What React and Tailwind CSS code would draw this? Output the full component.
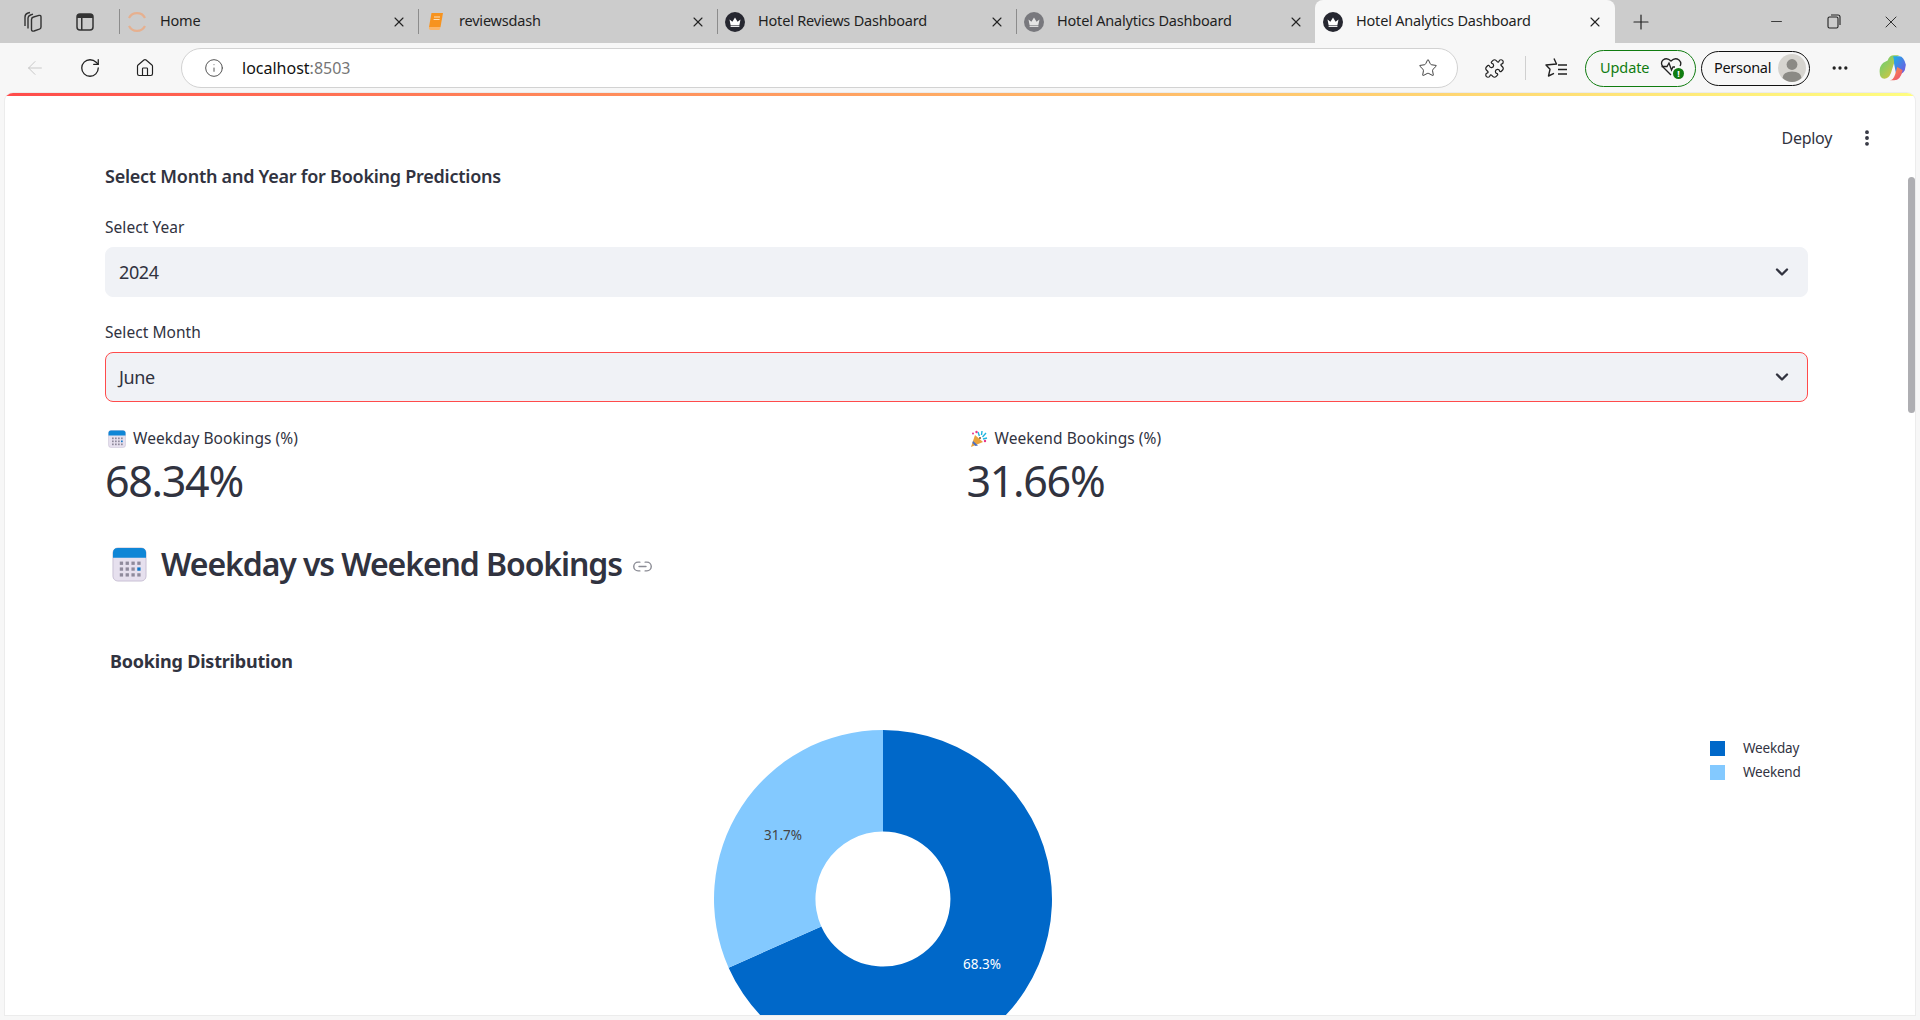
import React from 'react';
import { ArrowLeft, RotateCw, Home, Info, Star, Puzzle, X, Plus, Minus, MoreHorizontal, Link2, ChevronDown, EllipsisVertical } from 'lucide-react';

const Crown = ({ faded }) => (
  <svg width="20" height="20" viewBox="0 0 20 20" className={faded ? 'opacity-50' : ''}>
    <circle cx="10" cy="10" r="10" fill="#262730" />
    <path d="M4.5 7.5 L7.4 9.8 L10 5.6 L12.6 9.8 L15.5 7.5 L14.4 13 H5.6 Z" fill="#fff" />
    <rect x="5.6" y="13.6" width="8.8" height="1.3" fill="#fff" />
  </svg>
);

const Spinner = () => (
  <svg width="20" height="22" viewBox="0 0 20 22" fill="none" stroke="#e6b08f" strokeWidth="2.2">
    <path d="M2 7 A9 9 0 0 1 18 7" />
    <path d="M2 15 A9 9 0 0 0 18 15" />
  </svg>
);

const Book = () => (
  <svg width="16" height="19" viewBox="0 0 16 19">
    <path d="M3.5 1 H15 L12.5 15 H1 Z" fill="#f7931e" />
    <path d="M1 15 Q0.4 18 3 18 H11.5 L12.5 15 Z" fill="#fbb568" />
    <path d="M6 5 H12 M5.6 7.5 H11.6" stroke="#ffe0b8" strokeWidth="1" />
  </svg>
);

const TabIcons = () => (
  <div className="w-[119px] shrink-0 flex items-center">
    <svg width="24" height="24" viewBox="0 0 24 24" fill="none" stroke="#333" strokeWidth="1.4" className="ml-[20px]" strokeLinejoin="round">
      <path d="M5 16 V7 Q5 4 8 3 L10 2.5" />
      <path d="M8 18.5 V8 Q8 6 10.5 5 L13 4.2" />
      <path d="M11.5 9.5 Q11.5 7.5 13.5 7 L19 5.4 Q21 5 21 7 V17 Q21 18.6 19.4 19.2 L14 21 Q11.5 21.6 11.5 19.4 Z" />
    </svg>
    <svg width="20" height="20" viewBox="0 0 20 20" fill="none" className="ml-[31px]">
      <rect x="2" y="2" width="16" height="16" rx="3" stroke="#333" strokeWidth="1.5" />
      <path d="M2 5 Q2 2 5 2 H15 Q18 2 18 5 V6 H2 Z M6 6 H7.5 V18 H6 Z" fill="#333" />
    </svg>
  </div>
);

const tabs = [
  { title: 'Home', icon: <Spinner /> },
  { title: 'reviewsdash', icon: <Book /> },
  { title: 'Hotel Reviews Dashboard', icon: <Crown /> },
  { title: 'Hotel Analytics Dashboard', icon: <Crown faded /> },
  { title: 'Hotel Analytics Dashboard', icon: <Crown />, active: true },
];

const Tab = ({ title, icon, active }) => (
  <div className={active ? 'w-[300px] h-[43px] shrink-0 flex items-center bg-[#f7f7f7] rounded-t-lg pl-[8px]' : 'w-[299px] h-[43px] shrink-0 flex items-center'}>
    {!active && <div className="w-px h-[25px] bg-[#8c8c8c]" />}
    <div className={active ? 'w-[20px] flex justify-center' : 'w-[20px] ml-[7px] flex justify-center'}>{icon}</div>
    <span className="ml-[13px] mb-[2px] flex-1 text-[14.5px] tracking-[-0.2px] text-[#1f1f1f]">{title}</span>
    <X size={16} strokeWidth={1.6} className={active ? 'mr-[12px] text-[#222]' : 'mr-[11px] text-[#222]'} />
  </div>
);

const TabStrip = () => (
  <div className="h-[43px] shrink-0 bg-[#cccccc] flex items-center">
    <TabIcons />
    {tabs.map((t, i) => (
      <Tab key={i} {...t} />
    ))}
    <Plus size={24} strokeWidth={1.2} className="ml-[14px] text-[#222]" />
    <Minus size={17} strokeWidth={1.2} className="ml-[115px] text-[#222]" />
    <svg width="14" height="15" viewBox="0 0 14 15" fill="none" stroke="#222" strokeWidth="1.1" className="ml-[42px]">
      <rect x="1" y="3" width="10" height="11" rx="1.5" />
      <path d="M4 1 H11 Q13 1 13 3 V11" />
    </svg>
    <X size={20} strokeWidth={1.1} className="ml-[40px] text-[#222]" />
  </div>
);

const ToolButton = ({ children, className }) => (
  <div className={'w-[40px] h-[40px] flex items-center justify-center shrink-0 ' + (className || '')}>{children}</div>
);

const HeartAlert = () => (
  <div className="relative w-[24px] h-[22px]">
    <svg width="22" height="20" viewBox="0 0 22 20" fill="none" stroke="#222" strokeWidth="1.3">
      <path d="M11 18 L3 10 Q0 6 3 3 Q7 0 11 4 Q15 0 19 3 Q22 6 20 9" />
      <path d="M1.5 9.5 H7 L9 6 L11.5 13 L13 10 H15" />
    </svg>
    <div className="absolute right-0 bottom-0 w-[11px] h-[11px] rounded-full bg-[#107c10] text-white text-[9px] leading-[11px] font-bold text-center">!</div>
  </div>
);

const Avatar = () => (
  <svg width="28" height="28" viewBox="0 0 28 28">
    <circle cx="14" cy="14" r="14" fill="#d6d4cf" />
    <circle cx="14" cy="10.5" r="5.4" fill="#8b8a85" />
    <path d="M4.5 24 Q5 17.5 14 17.5 Q23 17.5 23.5 24 Q19 28 14 28 Q9 28 4.5 24 Z" fill="#8b8a85" />
  </svg>
);

const Copilot = () => (
  <svg width="30" height="30" viewBox="0 0 28 28">
    <defs>
      <linearGradient id="cpa" x1="0" y1="0" x2="1" y2="1">
        <stop offset="0" stopColor="#19b2e8" />
        <stop offset="1" stopColor="#7a4fe0" />
      </linearGradient>
      <linearGradient id="cpb" x1="0" y1="0" x2="1" y2="1">
        <stop offset="0" stopColor="#5ad17a" />
        <stop offset="1" stopColor="#f2c230" />
      </linearGradient>
      <linearGradient id="cpc" x1="0" y1="0" x2="1" y2="1">
        <stop offset="0" stopColor="#f9a03c" />
        <stop offset="1" stopColor="#ec4a7a" />
      </linearGradient>
    </defs>
    <path d="M9 7 Q10.5 2 15 2 H20 Q17 3 15.5 8 L12 19 Q10 24 6 24 Q1.5 24 1.5 17 Q1.5 12 5 9 Z" fill="url(#cpb)" />
    <path d="M14 3 H20 Q24 3 26 11 L25 16 Q22 21 17 20 L15 10 Q15 5 14 3 Z" fill="url(#cpa)" />
    <path d="M10 25.5 Q14 26 16 20 L18 13 L23 16 Q21 25.5 15 25.5 Z" fill="url(#cpc)" />
  </svg>
);

const Toolbar = () => (
  <div className="h-[50px] shrink-0 bg-[#f7f7f7] flex items-center pl-[15px]">
    <ToolButton>
      <ArrowLeft size={22} strokeWidth={1} className="text-[#c4c4c4]" />
    </ToolButton>
    <ToolButton className="ml-[15px]">
      <RotateCw size={22} strokeWidth={1.4} className="text-[#222]" />
    </ToolButton>
    <ToolButton className="ml-[15px]">
      <Home size={20} strokeWidth={1.4} className="text-[#222]" />
    </ToolButton>
    <div className="ml-[16px] w-[1277px] h-[40px] shrink-0 bg-white border border-[#d2d2d2] rounded-full flex items-center pl-[22px] pr-[19px]">
      <Info size={20} strokeWidth={1.2} className="text-[#555]" />
      <span className="ml-[18px] flex-1 text-[16px] text-[#111]">
        localhost<span className="text-[#767676]">:8503</span>
      </span>
      <Star size={20} strokeWidth={1.2} className="text-[#444]" />
    </div>
    <ToolButton className="ml-[16px]">
      <Puzzle size={21} strokeWidth={1.4} className="text-[#222]" />
    </ToolButton>
    <div className="ml-[11px] w-px h-[24px] bg-[#d0d0d0]" />
    <ToolButton className="ml-[10px]">
      <svg width="24" height="22" viewBox="0 0 24 22" fill="none" stroke="#222" strokeWidth="1.4" strokeLinejoin="round">
        <path d="M10 1.5 L12.5 7 L2 8 L6 12.3 L4.5 19 L10 16.3" />
        <path d="M14 8 H23 M14 12.5 H23 M14 17 H23" />
      </svg>
    </ToolButton>
    <div className="ml-[9px] w-[111px] h-[37px] shrink-0 rounded-full border-[1.5px] border-[#107c10] flex items-center pl-[14px]">
      <span className="text-[14.5px] tracking-[-0.1px] text-[#107c10] w-[60px]">Update</span>
      <HeartAlert />
    </div>
    <div className="ml-[5px] w-[109px] h-[35px] shrink-0 rounded-full border-[1.5px] border-[#111] flex items-center pl-[12px]">
      <span className="text-[14.5px] tracking-[-0.3px] text-[#111] w-[64px]">Personal</span>
      <Avatar />
    </div>
    <ToolButton className="ml-[10px]">
      <MoreHorizontal size={20} strokeWidth={2} className="text-[#222]" />
    </ToolButton>
    <ToolButton className="ml-[13px]">
      <Copilot />
    </ToolButton>
  </div>
);

const CalendarEmoji = ({ size }) => (
  <svg width={size} height={size} viewBox="0 0 36 36">
    <rect x="1" y="1" width="34" height="34" rx="5" fill="#e6e0ee" stroke="#c7bfd4" strokeWidth="1" />
    <path d="M1 11 V6 Q1 1 6 1 H30 Q35 1 35 6 V11 Z" fill="#0f86d6" />
    {[0, 1, 2, 3].map((c) =>
      [0, 1, 2].map((r) => (
        <rect key={c + '-' + r} x={8 + c * 6} y={15 + r * 6} width="3.4" height="3.4" fill={c === 3 && r === 1 ? '#0f78c8' : '#8f8a9c'} />
      ))
    )}
  </svg>
);

const PartyEmoji = () => (
  <svg width="18" height="18" viewBox="0 0 18 18">
    <path d="M1 17 L5 5 L13 12 Z" fill="#e8a33d" />
    <path d="M3 11 L8 15.5 L5.5 16 L2.4 13 Z" fill="#4a6fc4" />
    <path d="M8 2 L9.4 6 M12 1 L11.5 5 M16 3 L12.5 7 M17 8 L13 9" stroke="#1fb6e0" strokeWidth="1.4" />
    <circle cx="6.5" cy="2" r="1.2" fill="#e8358a" />
    <circle cx="3" cy="3.5" r="1" fill="#e8358a" />
    <circle cx="15" cy="11" r="1.2" fill="#e8358a" />
    <circle cx="10" cy="8" r="1" fill="#7a4a2a" />
  </svg>
);

const Select = ({ label, value, focused }) => (
  <div className="flex flex-col">
    <label className="h-[20px] text-[15.5px] leading-[20px] tracking-[0.05px] mb-[10px]">{label}</label>
    <div className={focused ? 'h-[50px] rounded-lg bg-[#f0f2f6] border border-[#ff4b4b] flex items-center pl-[13px] pr-[15px]' : 'h-[50px] rounded-lg bg-[#f0f2f6] border border-[#f0f2f6] flex items-center pl-[13px] pr-[15px]'}>
      <span className="flex-1 text-[18px] tracking-[-0.4px]">{value}</span>
      <ChevronDown size={20} strokeWidth={2.8} className="text-[#31333f]" />
    </div>
  </div>
);

const Metric = ({ icon, label, value }) => (
  <div className="flex flex-col">
    <div className="h-[20px] mt-[1px] flex items-center gap-[7px] pl-[3px] text-[15.5px] tracking-[0.05px]">
      {icon}
      <span>{label}</span>
    </div>
    <div className="mt-[8px] h-[48px] text-[43px] leading-[48px] tracking-[-1.3px]">{value}</div>
  </div>
);

// donut is plain svg, coordinates relative to the chart box
const Donut = () => (
  <svg width="340" height="315" viewBox="0 0 340 315" className="block">
    <path d="M170 29 A169 169 0 1 1 15.6 266.7 L108.3 225.5 A67.5 67.5 0 1 0 170 130.5 Z" fill="#0068c9" />
    <path d="M170 29 A169 169 0 0 0 15.6 266.7 L108.3 225.5 A67.5 67.5 0 0 1 170 130.5 Z" fill="#83c9ff" />
    <text x="70" y="139" textAnchor="middle" fontSize="13.5" fill="#444">31.7%</text>
    <text x="269" y="268" textAnchor="middle" fontSize="13.5" fill="#fff">68.3%</text>
  </svg>
);

const Legend = () => (
  <div className="absolute left-[1705px] top-[40px] flex flex-col gap-[9px] text-[13.5px] tracking-[-0.2px]">
    <div className="flex items-center h-[15px]">
      <div className="w-[15px] h-[15px] bg-[#0068c9]" />
      <span className="ml-[18px]">Weekday</span>
    </div>
    <div className="flex items-center h-[15px]">
      <div className="w-[15px] h-[15px] bg-[#83c9ff]" />
      <span className="ml-[18px]">Weekend</span>
    </div>
  </div>
);

const Page = () => (
  <div className="relative flex-1 min-h-0 mx-[5px] mb-[5px] bg-white rounded-t-lg overflow-hidden ring-1 ring-[#ececec] text-[#31333f]">
    <div className="h-[3px] bg-gradient-to-r from-[#ff4b4b] to-[#fffd80]" />
    <div className="absolute right-[83px] top-[35px] text-[16px] tracking-[-0.3px] leading-[20px]">Deploy</div>
    <EllipsisVertical size={20} strokeWidth={2.6} className="absolute right-[38px] top-[35px]" />
    <div className="absolute right-0 top-[84px] w-[7px] h-[236px] rounded-full bg-[#aeaeb2]" />

    <div className="pl-[100px] pr-[107px] pt-[68px]">
      <h3 className="h-[24px] text-[18px] leading-[24px] font-semibold tracking-[-0.25px]">Select Month and Year for Booking Predictions</h3>
      <div className="mt-[29px] flex flex-col gap-[25px]">
        <Select label="Select Year" value="2024" />
        <Select label="Select Month" value="June" focused />
      </div>
      <div className="mt-[26px] grid grid-cols-2 gap-5">
        <Metric icon={<CalendarEmoji size={18} />} label="Weekday Bookings (%)" value="68.34%" />
        <Metric icon={<PartyEmoji />} label="Weekend Bookings (%)" value="31.66%" />
      </div>
      <div className="mt-[34px] h-[50px] flex items-center pl-[7px]">
        <CalendarEmoji size={35} />
        <h2 className="ml-[14px] text-[32px] leading-[50px] font-semibold tracking-[-1.1px]">Weekday vs Weekend Bookings</h2>
        <Link2 size={21} strokeWidth={1.6} className="ml-[10px] mt-[5px] text-[#8a8b94]" />
      </div>
      <div className="mt-[60px] pl-[5px] h-[24px] text-[18px] leading-[24px] font-bold tracking-[-0.2px]">Booking Distribution</div>
    </div>
    <div className="relative mt-[28px]">
      <div className="flex pl-[708px]">
        <Donut />
      </div>
      <Legend />
    </div>
  </div>
);

const App = () => {
  return (
    <div className="w-[1920px] h-[1020px] overflow-hidden flex flex-col bg-[#f7f7f7] font-['Noto_Sans',sans-serif]">
      <TabStrip />
      <Toolbar />
      <Page />
    </div>
  );
};

export default App;
